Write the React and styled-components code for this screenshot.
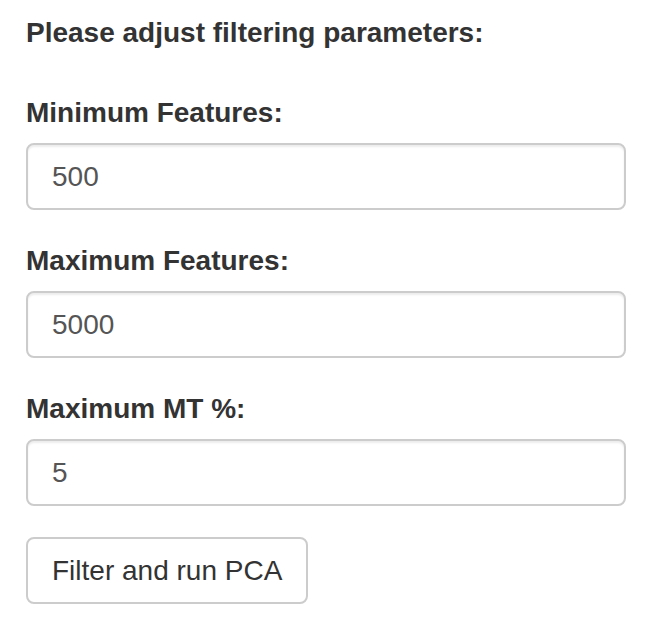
import React, { useState } from "react";
import styled, { createGlobalStyle } from "styled-components";

const GlobalStyle = createGlobalStyle`
  body {
    margin: 0;
    background: #fff;
    font-family: "Liberation Sans", Arial, Helvetica, sans-serif;
    color: #333;
  }
`;

const Panel = styled.div`
  padding: 13px 26px 0 26px;
  width: 600px;
`;

const Heading = styled.div`
  font-size: 28px;
  line-height: 40px;
  font-weight: 700;
  margin-bottom: 40px;
`;

const FormGroup = styled.div`
  margin-bottom: 31px;
`;

const Label = styled.label`
  display: block;
  font-size: 28px;
  line-height: 40px;
  font-weight: 700;
  margin-bottom: 10px;
`;

const Input = styled.input`
  display: block;
  box-sizing: border-box;
  width: 100%;
  height: 67px;
  padding: 0 24px;
  font-family: inherit;
  font-size: 28px;
  color: #555;
  background: #fff;
  border: 2px solid #ccc;
  border-radius: 8px;
  box-shadow: inset 0 2px 2px rgba(0, 0, 0, 0.075);
  outline: none;
`;

const Button = styled.button`
  box-sizing: border-box;
  height: 67px;
  padding: 0 24px;
  font-family: inherit;
  font-size: 28px;
  color: #333;
  background: #fff;
  border: 2px solid #ccc;
  border-radius: 8px;
  cursor: pointer;
`;

const fields = [
  { id: "minFeatures", label: "Minimum Features:", value: "500" },
  { id: "maxFeatures", label: "Maximum Features:", value: "5000" },
  { id: "maxMt", label: "Maximum MT %:", value: "5" }
];

const App = () => {
  const [values, setValues] = useState(
    Object.fromEntries(fields.map(f => [f.id, f.value]))
  );

  return (
    <Panel>
      <GlobalStyle />
      <Heading>Please adjust filtering parameters:</Heading>
      {fields.map(f => (
        <FormGroup key={f.id}>
          <Label htmlFor={f.id}>{f.label}</Label>
          <Input
            id={f.id}
            type="text"
            value={values[f.id]}
            onChange={e => setValues({ ...values, [f.id]: e.target.value })}
          />
        </FormGroup>
      ))}
      <Button type="button">Filter and run PCA</Button>
    </Panel>
  );
};

export default App;
